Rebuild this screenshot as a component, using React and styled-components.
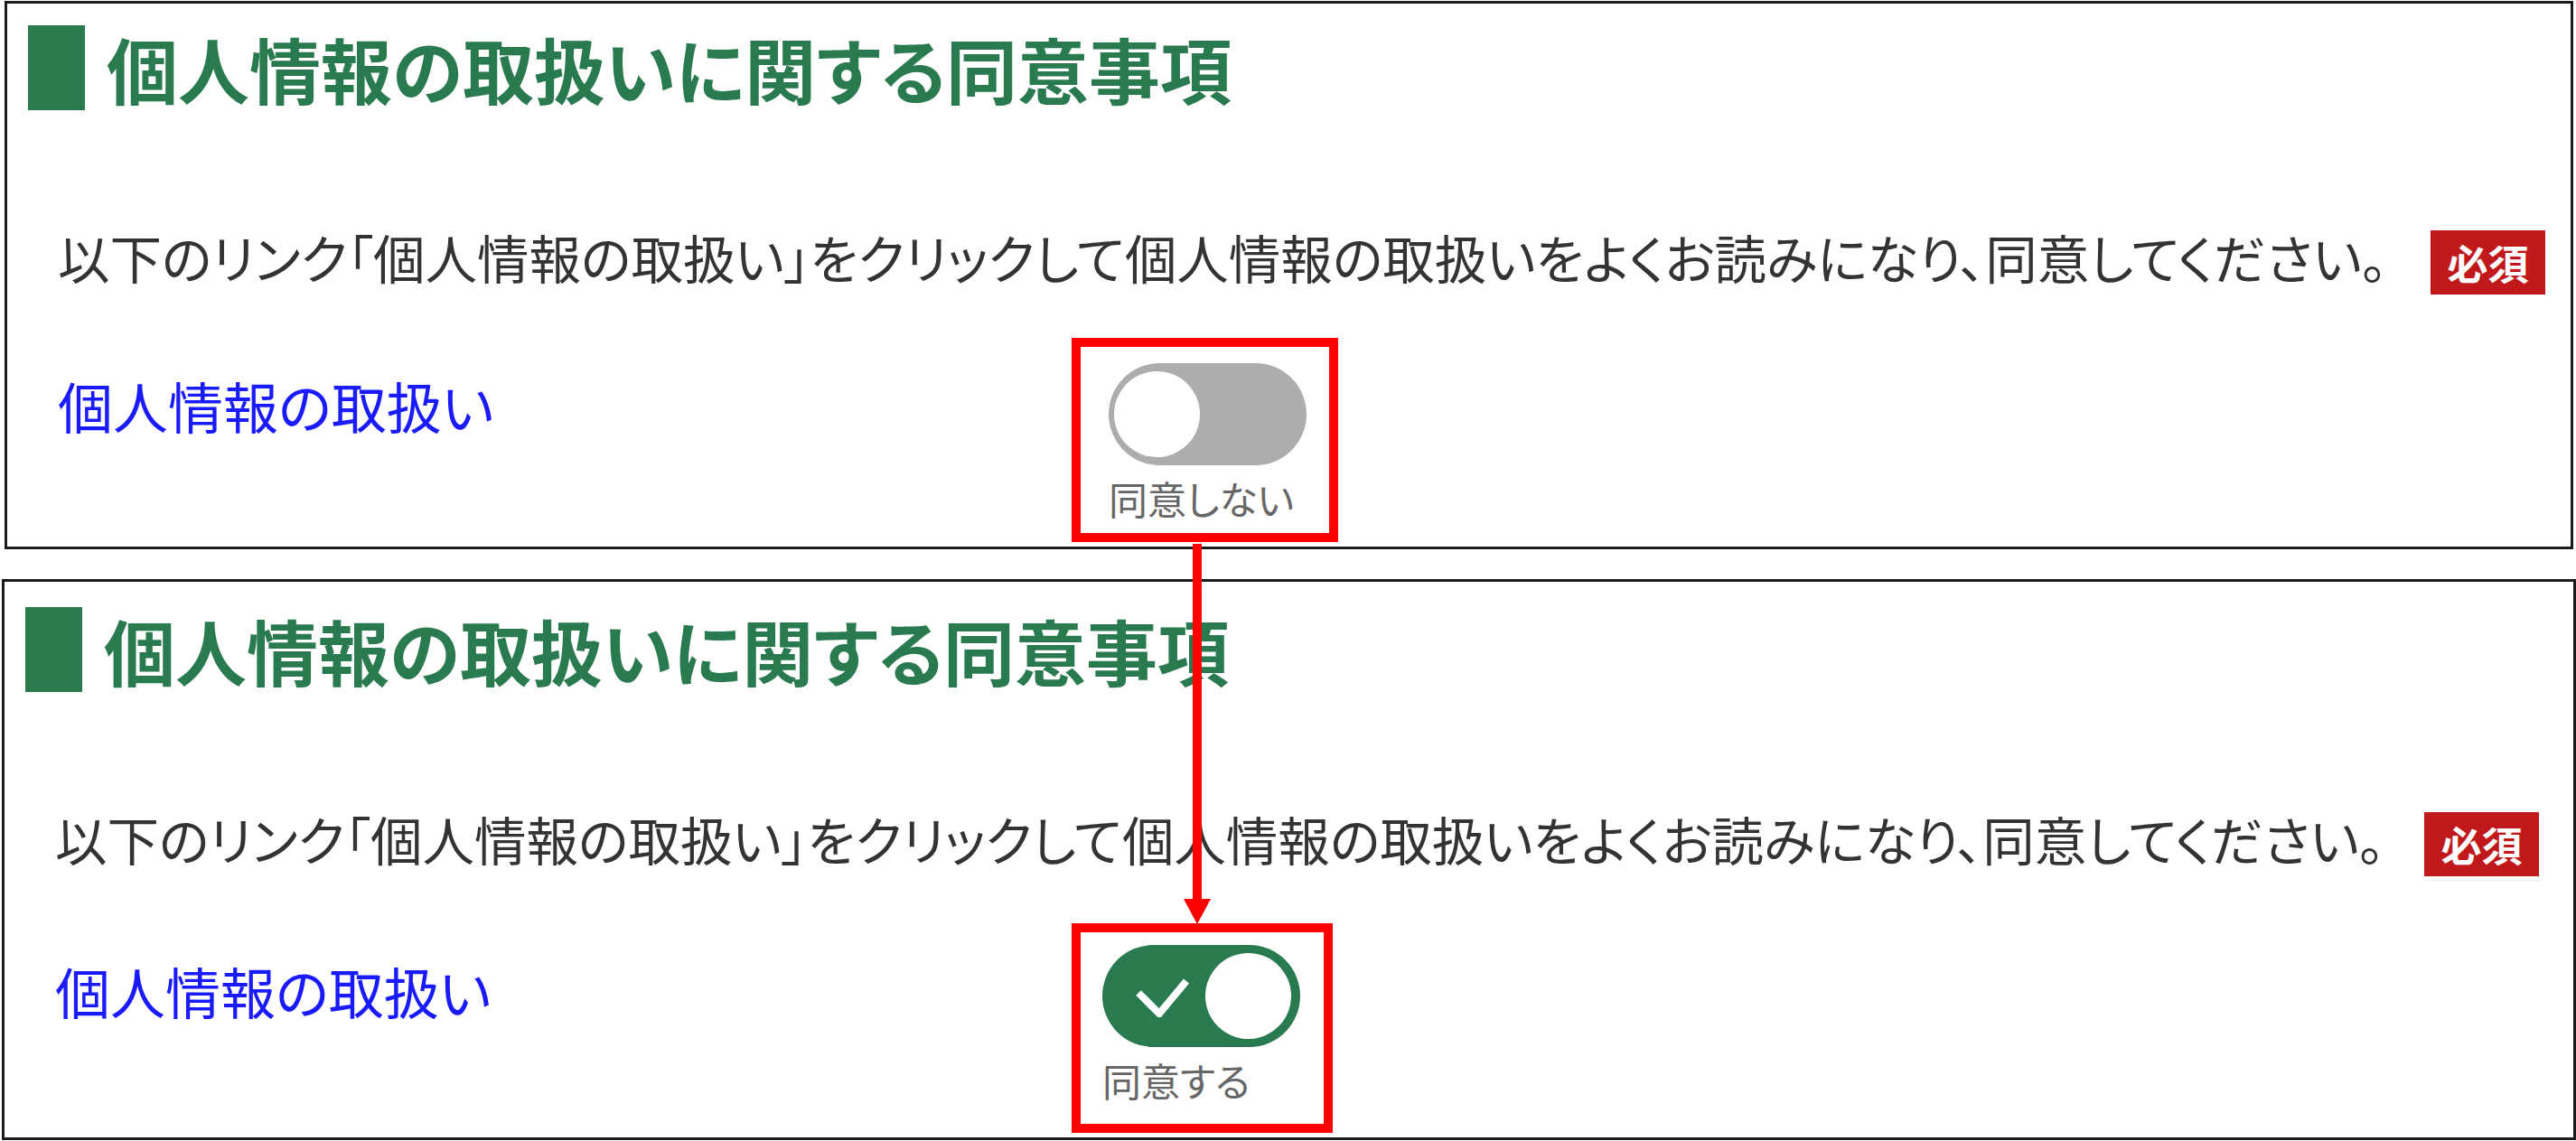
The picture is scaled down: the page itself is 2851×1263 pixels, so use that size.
import React from 'react';
import styled, { createGlobalStyle } from 'styled-components';

const colors = {
    green: '#2a7a4f',
    text: '#333333',
    link: '#1a1aff',
    badge: '#c1191b',
    track: '#adadad',
    caption: '#666666',
    mark: '#ff0000',
    frame: '#1b1b1b'
};

const GlobalStyle = createGlobalStyle`
    html, body {
        margin: 0;
        padding: 0;
        background: #ffffff;
    }
    body {
        font-family: "Noto Sans CJK JP", "Noto Sans", sans-serif;
        font-feature-settings: "palt";
    }
`;

const Page = styled.div`
    position: relative;
    width: 2851px;
    height: 1263px;
    overflow: hidden;
    padding-top: 1px;
    box-sizing: border-box;
`;

const Panel = styled.section`
    box-sizing: border-box;
    width: ${props => props.$width}px;
    height: ${props => props.$height}px;
    margin-left: ${props => props.$left}px;
    margin-top: ${props => props.$top}px;
    border: 3px solid ${colors.frame};
    padding: ${props => props.$padTop}px ${props => props.$padRight}px 0 23px;
    display: flex;
    flex-direction: column;
`;

const Heading = styled.div`
    display: flex;
    align-items: center;
    gap: 24px;
    height: 94px;
`;

const Bar = styled.span`
    width: 63px;
    height: 94px;
    background: ${colors.green};
    flex: none;
`;

const Title = styled.h2`
    margin: 0;
    font-size: 79px;
    line-height: 1;
    font-weight: 700;
    color: ${colors.green};
    white-space: nowrap;
`;

const Lead = styled.div`
    display: flex;
    align-items: center;
    justify-content: space-between;
    margin-top: 133px;
    padding-left: 33px;
`;

const LeadText = styled.p`
    margin: 0 0 12px;
    font-size: 57.5px;
    line-height: 1;
    color: ${colors.text};
    white-space: nowrap;
`;

const Badge = styled.span`
    display: flex;
    flex: none;
    align-items: center;
    justify-content: center;
    width: 127px;
    height: 71px;
    background: ${colors.badge};
    color: #ffffff;
    font-size: 45px;
    font-weight: 700;
    line-height: 1;
`;

const Consent = styled.div`
    display: grid;
    grid-template-columns: ${props => props.$linkCol}px auto;
    align-items: start;
    margin-top: ${props => props.$gap}px;
    padding-left: 33px;
`;

const PolicyLink = styled.a`
    margin-top: 44px;
    font-size: 61px;
    line-height: 1;
    color: ${colors.link};
    text-decoration: none;
    white-space: nowrap;
`;

const Highlight = styled.div`
    display: flex;
    flex-direction: column;
    align-items: flex-start;
    width: fit-content;
    border: 10px solid ${colors.mark};
    padding: ${props => props.$pad};
`;

const Track = styled.div`
    box-sizing: border-box;
    display: flex;
    align-items: center;
    justify-content: ${props => props.$on ? 'space-between' : 'flex-start'};
    width: 219px;
    height: 113px;
    border-radius: 57px;
    padding: ${props => props.$on ? '0 10px 0 36px' : '0 0 0 6px'};
    background: ${props => props.$on ? colors.green : colors.track};
`;

const Knob = styled.span`
    width: 95px;
    height: 95px;
    border-radius: 50%;
    background: #ffffff;
`;

const Caption = styled.span`
    margin-top: 15px;
    font-size: 43px;
    line-height: 1;
    color: ${colors.caption};
    white-space: nowrap;
`;

const Arrow = styled.svg`
    position: absolute;
    left: 1310px;
    top: 602px;
`;

const Check = () => (
    <svg width="62" height="46" viewBox="0 0 62 46">
        <polyline points="4,19 27,42 57,6" fill="none" stroke="#ffffff" strokeWidth="8" />
    </svg>
);

const panels = [
    { on: false, left: 5, top: 0, width: 2843, height: 607, padTop: 24, padRight: 28, linkCol: 1122, gap: 48, ring: '18px 25px 17px 31px', label: '同意しない' },
    { on: true, left: 2, top: 33, width: 2849, height: 621, padTop: 28, padRight: 38, linkCol: 1125, gap: 52, ring: '14px 26px 27px 24px', label: '同意する' }
];

export default function App() {
    return (
        <Page>
            <GlobalStyle />
            {panels.map((p, i) => (
                <Panel key={i} $left={p.left} $top={p.top} $width={p.width} $height={p.height} $padTop={p.padTop} $padRight={p.padRight}>
                    <Heading>
                        <Bar />
                        <Title>個人情報の取扱いに関する同意事項</Title>
                    </Heading>
                    <Lead>
                        <LeadText>以下のリンク「個人情報の取扱い」をクリックして個人情報の取扱いをよくお読みになり、同意してください。</LeadText>
                        <Badge>必須</Badge>
                    </Lead>
                    <Consent $linkCol={p.linkCol} $gap={p.gap}>
                        <PolicyLink href="#">個人情報の取扱い</PolicyLink>
                        <Highlight $pad={p.ring}>
                            <Track $on={p.on}>
                                {p.on && <Check />}
                                <Knob />
                            </Track>
                            <Caption>{p.label}</Caption>
                        </Highlight>
                    </Consent>
                </Panel>
            ))}
            <Arrow width="30" height="421" viewBox="0 0 30 421">
                <rect x="10" y="0" width="10" height="394" fill={colors.mark} />
                <polygon points="0,393 30,393 15,421" fill={colors.mark} />
            </Arrow>
        </Page>
    );
}
